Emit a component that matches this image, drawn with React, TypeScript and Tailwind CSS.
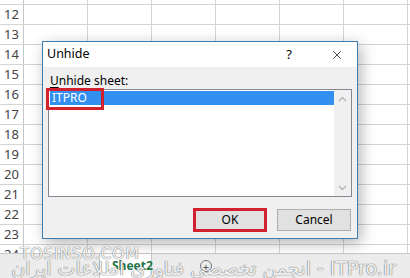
import { X } from "lucide-react";

const rows = [12, 13, 14, 15, 16, 17, 18, 19, 20, 21, 22, 23, 24];
const cols = [0, 1, 2, 3, 4, 5];

const Chevron = ({ down }: { down?: boolean }) => (
  <svg width="9" height="6" viewBox="0 0 9 6" className="text-[#b4b4b4]">
    <path d={down ? "M1 1l3.5 3.5L8 1" : "M1 5l3.5-3.5L8 5"} fill="none" stroke="currentColor" strokeWidth="1.3" />
  </svg>
);

const App = () => {
  return (
    <div className="relative w-[410px] h-[278px] overflow-hidden bg-white font-['Noto_Sans',sans-serif] text-[12px] text-black">
      {/* sheet grid */}
      <div className="h-[253px] overflow-hidden flex flex-col">
        <div className="h-[5px] shrink-0 flex border-b border-[#d4d4d4]">
          <div className="w-[24px] border-r border-[#c6c6c6]" />
          {cols.map((c) => (
            <div key={c} className="w-[64px] shrink-0 border-r border-[#d4d4d4]" />
          ))}
        </div>
        {rows.map((r) => (
          <div key={r} className="h-[20px] shrink-0 flex border-b border-[#d4d4d4]">
            <div className="w-[24px] shrink-0 border-r border-[#c6c6c6] flex items-center justify-center text-[13px] text-[#444]">
              {r}
            </div>
            {cols.map((c) => (
              <div key={c} className="w-[64px] shrink-0 border-r border-[#d4d4d4]" />
            ))}
          </div>
        ))}
      </div>

      {/* tab bar */}
      <div className="h-[25px] flex items-stretch bg-[#ececec] border-t border-[#c8c8c8]">
        <div className="w-[100px] border-r border-[#c8c8c8]" />
        <div className="w-[52px] bg-white border-r border-[#c8c8c8] flex items-center pl-[12px] font-bold text-[#217346] text-[12px]">
          Sheet2
        </div>
        <div className="flex items-center pl-[48px]">
          <div className="w-[12px] h-[12px] rounded-full border border-[#777] flex items-center justify-center text-[#555] text-[11px] leading-none">+</div>
        </div>
      </div>

      {/* dialog */}
      <div className="absolute left-[42px] top-[41px] w-[316px] h-[198px] border border-[#3b7fb5] bg-[#f0f0f0] shadow-[3px_4px_14px_rgba(0,0,0,0.3)] flex flex-col">
        <div className="h-[25px] bg-white flex items-center pl-[4px] pr-[13px]">
          <span className="text-[12.5px]">Unhide</span>
          <span className="ml-auto text-[13px] mr-[38px]">?</span>
          <X size={14} strokeWidth={1.2} />
        </div>
        <div className="flex-1 flex flex-col px-[5px] pt-[6px]">
          <div className="h-[16px] leading-[16px] pl-[2px]">
            <span className="underline underline-offset-2">U</span>nhide sheet:
          </div>
          <div className="h-[108px] border border-[#828790] bg-white flex">
            <div className="flex-1 pt-[1px] pl-[1px]">
              <div className="h-[14px] bg-[#3390f0] text-white leading-[14px] pl-[2px]">ITPRO</div>
            </div>
            <div className="w-[17px] bg-[#f0f0f0] flex flex-col items-center justify-between pt-[6px] pb-[5px]">
              <Chevron />
              <Chevron down />
            </div>
          </div>
          <div className="mt-[11px] flex items-center justify-end gap-[10px] pr-[1px]">
            <button className="w-[74px] h-[24px] border-[3px] border-[#d1202e] bg-[#e1e1e1] text-[12px]">OK</button>
            <button className="w-[74px] h-[22px] border border-[#adadad] bg-[#e1e1e1] text-[12px]">Cancel</button>
          </div>
        </div>
      </div>

      {/* red highlight around the selected item */}
      <div className="absolute left-[46px] top-[88px] w-[58px] h-[22px] border-[3px] border-[#d1202e]" />

      {/* watermark */}
      <div className="absolute left-[20px] top-[242px] text-[16px] tracking-[0.5px] font-['DejaVu_Sans',sans-serif] text-white/90 [text-shadow:0_0_1px_#777,0_0_1px_#777]">
        TOSINSO.COM
      </div>
      <div
        dir="rtl"
        className="absolute left-[18px] top-[254px] w-[378px] text-[19px] whitespace-nowrap font-['DejaVu_Sans',sans-serif] text-white/90 [text-shadow:0_0_1px_#666,0_0_1px_#666]"
      >
        ITPro.ir - انجمن تخصصی فناوری اطلاعات ایران
      </div>
    </div>
  );
};

export default App;
